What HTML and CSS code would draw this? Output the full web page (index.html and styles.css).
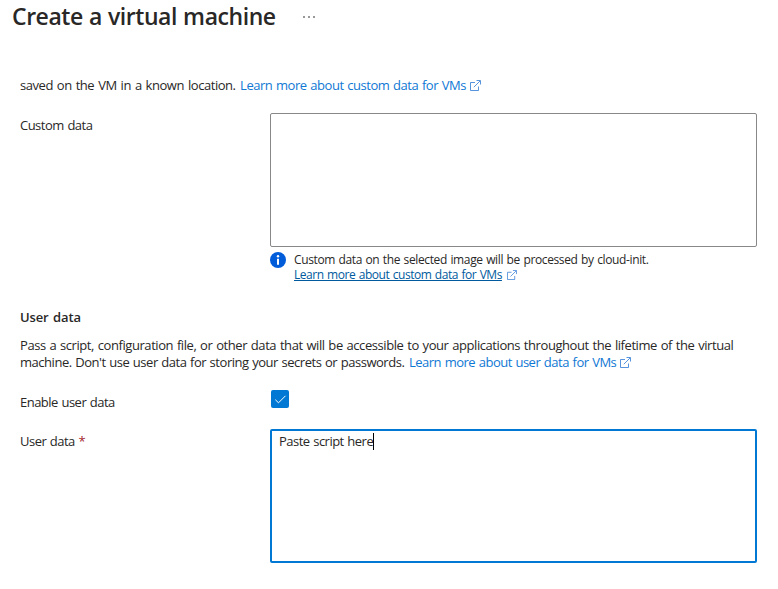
FILE: index.html
```html
<!DOCTYPE html>
<html lang="en">
<head>
<meta charset="utf-8">
<title>Create a virtual machine</title>
<link rel="stylesheet" href="styles.css">
</head>
<body>
<svg width="0" height="0" class="defs"><symbol id="ext" viewBox="0 0 11 11"><path d="M5 2.5H.5v8h8V6.5M3.8 7.2 10 1M6.5.5h4v4" fill="none" stroke="currentColor" stroke-width=".8"/></symbol></svg>
<header class="head"><h1>Create a virtual machine</h1><span class="more"><i></i><i></i><i></i></span></header>
<main>
<p class="intro"><span class="lead">saved on the VM in a known location.</span><a class="link">Learn more about custom data for VMs</a><svg class="ext"><use href="#ext"/></svg></p>
<div class="row custom"><label>Custom data</label>
<div class="field"><div class="box"></div>
<div class="info"><svg class="badge" viewBox="0 0 16 16"><circle cx="8" cy="8" r="8" fill="#015cda"/><path d="M8 6.8v6" stroke="#fff" stroke-width="2"/><circle cx="8" cy="4.2" r="1.2" fill="#fff"/></svg>
<div><div class="note">Custom data on the selected image will be processed by cloud-init.</div><div><a class="under">Learn more about custom data for VMs</a><svg class="ext small"><use href="#ext"/></svg></div></div></div></div></div>
<h2>User data</h2>
<p class="desc"><span class="line-one">Pass a script, configuration file, or other data that will be accessible to your applications throughout the lifetime of the virtual</span><br><span class="line-two">machine. Don't use user data for storing your secrets or passwords.</span><a class="link user-link">Learn more about user data for VMs</a><svg class="ext"><use href="#ext"/></svg></p>
<div class="row enable"><label>Enable user data</label><div class="check"><svg viewBox="0 0 18 18"><path d="m4.3 9.7 3.2 3.1 7-7" fill="none" stroke="#fff"/></svg></div></div>
<div class="row user"><label>User data <b class="req">*</b></label><div class="box active"><span class="value">Paste script here</span><i class="caret"></i></div></div>
</main>
</body>
</html>
```
FILE: styles.css
```css
*{box-sizing:border-box}
body{margin:0;width:778px;height:589px;background:#fff;color:#292827;font:13px/17px "Open Sans",sans-serif;overflow:hidden;letter-spacing:-.52px;word-spacing:.8px}
h1,h2,p{margin:0}
.defs{display:block;height:0}
.head{display:flex;padding-left:12px;height:77px}
h1{font-size:23px;line-height:33px;font-weight:600;width:290px;white-space:nowrap;letter-spacing:-.44px;word-spacing:.6px}
.more{display:flex;gap:3px;padding:16px 0 0 1px}
.more i{width:2px;height:2px;background:#999}
main{padding:0 21px 0 20px}
p{white-space:nowrap}
a{color:#0f78d4}
.lead,.line-two{margin-right:4.5px}
.lead{letter-spacing:-.45px;word-spacing:1px}
.link{letter-spacing:-.47px;word-spacing:.8px}
.line-one{letter-spacing:-.43px;word-spacing:.82px}
.line-two{letter-spacing:-.46px;word-spacing:.6px}
.user-link{letter-spacing:-.51px}
.ext{width:11px;height:11px;margin-left:4px;color:#2c78d4;vertical-align:-1px}
.row{display:grid;grid-template-columns:250px 487px}
.custom{margin-top:19px}
.custom label{padding-top:4px}
.box{height:134px;border:1px solid #8a8886;border-radius:2px}
.info{display:flex;gap:8px;margin-top:5px;font-size:12px;line-height:15px}
.note{letter-spacing:-.37px;word-spacing:.75px}
.badge{width:16px;height:16px}
.under{color:#005a9e;text-decoration:underline;letter-spacing:-.46px;word-spacing:.8px}
.small{width:10px;height:10px;margin-left:5px}
h2{font-size:13px;line-height:18px;font-weight:600;margin-top:26px;letter-spacing:-.15px;word-spacing:1.4px}
.desc{margin-top:11px}
.enable{margin-top:19px}
.check{width:18px;height:18px;margin-left:1px;background:#0078d4;border-radius:2px}
.check svg{display:block}
.enable label{padding-top:4px}
.user{margin-top:18px}
.user label{padding-top:4px}
.active{border:2px solid #0078d4;padding:2px 7px;display:flex}
.req{color:#a4262c;font-weight:400}
.caret{width:1px;height:17px;background:#000}
```
